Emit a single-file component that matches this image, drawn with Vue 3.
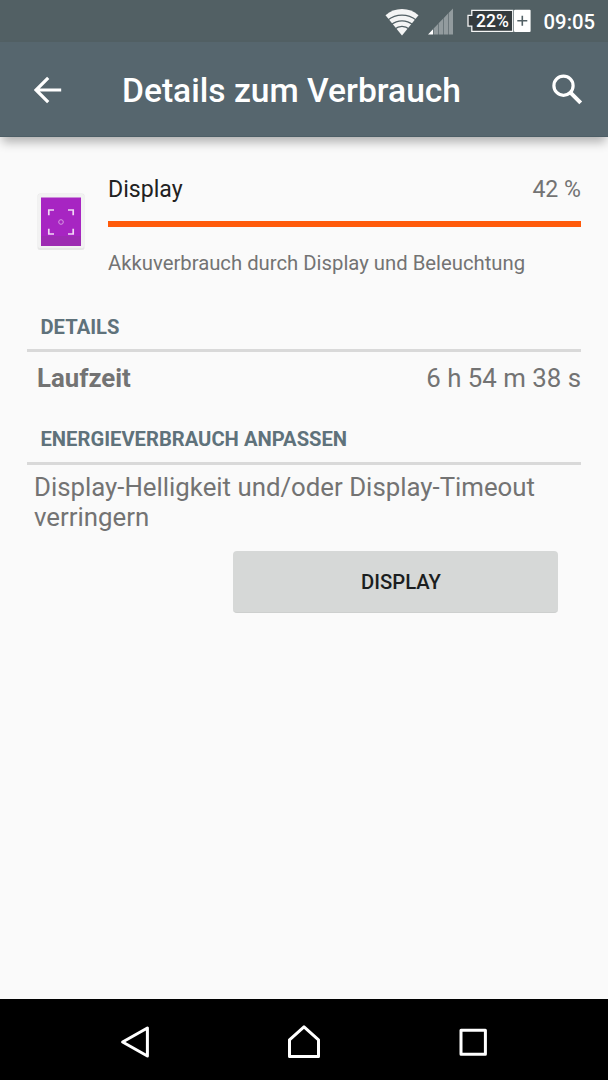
<script setup>
import { ref } from 'vue';

const charge = ref(22);
const time = ref('09:05');

const usage = ref({
  name: 'Display',
  percent: 42,
  level: 100, // Breite des Balkens
  description: 'Akkuverbrauch durch Display und Beleuchtung'
});

const details = ref([
  { label: 'Laufzeit', value: '6 h 54 m 38 s' }
]);
</script>

<template>
  <div class="screen">
    <div class="status-bar">
      <svg class="wifi" width="34" height="28" viewBox="0 0 34 28">
        <path d="M17 27.5L0.5 7.2Q7.5 1 17 1T33.5 7.2Z" fill="#f4f5f5" />
        <path d="M2.5 12.2Q9 7.1 17 7.1T31.5 12.2M6 16.8Q11 12.8 17 12.8T28 16.8M9.5 21.2Q13 18.4 17 18.4T24.5 21.2" fill="none" stroke="#526065" stroke-width="1.3" />
      </svg>
      <svg class="signal" width="26" height="27" viewBox="0 0 26 27">
        <path d="M0 26.5L5 21.2V26.5Z" fill="#fff" />
        <path d="M5.6 20.6L10 16V26.5H5.6ZM10.6 15.3L15 10.8V26.5H10.6ZM15.6 10.2L20 5.6V26.5H15.6ZM20.6 5L25 .4V26.5H20.6Z" fill="#929b9e" />
      </svg>
      <div class="battery">
        <svg width="64" height="24" viewBox="0 0 64 24">
          <path d="M4.8 1.3H45.7V22.3H4.8V17.2H1V6.4H4.8Z" fill="#343b3e" stroke="#f4f5f5" stroke-width="1.3" />
          <rect x="47" y=".7" width="16.6" height="22.3" rx="1" fill="#fff" />
          <path d="M50.3 11.8H60.3M55.3 6.8V16.8" stroke="#526065" stroke-width="1.6" />
        </svg>
        <span class="battery-text">{{ charge }}%</span>
      </div>
      <span class="clock">{{ time }}</span>
    </div>

    <header class="app-bar">
      <svg class="back" width="28" height="28" viewBox="0 0 28 28">
        <path d="M27.2 14H2.5M14.2 1.8L2 14L14.2 26.2" fill="none" stroke="#fff" stroke-width="3.2" />
      </svg>
      <h1>Details zum Verbrauch</h1>
      <svg class="search" width="32" height="32" viewBox="0 0 32 32">
        <circle cx="11.5" cy="11.7" r="9.6" fill="none" stroke="#fff" stroke-width="3.2" />
        <path d="M18.5 18.7L28.7 28.9" stroke="#fff" stroke-width="4" />
      </svg>
    </header>

    <main class="content">
      <section class="usage">
        <svg class="usage-icon" width="48" height="58" viewBox="0 0 48 58">
          <rect x=".5" y=".5" width="47" height="56.5" rx="2.5" fill="#e7e7e7" />
          <rect x="1" y="1" width="46" height="54" rx="2" fill="#f2f2f2" />
          <rect x="4" y="4.5" width="40" height="48.5" fill="#a725c2" />
          <rect x="4" y="43" width="40" height="10" fill="#9d2bb2" />
          <path d="M11.8 22.2V17H17M31 17H36.2V22.2M36.2 35.8V41H31M17 41H11.8V35.8" fill="none" stroke="#f0d8f4" stroke-width="1.7" />
          <circle cx="24" cy="29" r="2.3" fill="none" stroke="#d79be2" stroke-width="1" />
        </svg>
        <div class="usage-body">
          <div class="usage-row">
            <span class="usage-name">{{ usage.name }}</span>
            <span class="usage-percent">{{ usage.percent }} %</span>
          </div>
          <div class="bar">
            <div class="bar-fill" :style="{ width: usage.level + '%' }"></div>
          </div>
          <p class="usage-description">{{ usage.description }}</p>
        </div>
      </section>

      <h2 class="details-title">DETAILS</h2>
      <div v-for="item in details" :key="item.label" class="detail-row">
        <strong>{{ item.label }}</strong>
        <span>{{ item.value }}</span>
      </div>

      <h2>ENERGIEVERBRAUCH ANPASSEN</h2>
      <p class="hint">Display-Helligkeit und/oder Display-Timeout verringern</p>
      <button class="display-btn">DISPLAY</button>
    </main>

    <nav class="nav-bar">
      <svg width="32" height="36" viewBox="0 0 32 36">
        <path d="M28.4 4V32L3.6 18Z" fill="none" stroke="#fff" stroke-width="3" stroke-linejoin="round" />
      </svg>
      <svg width="36" height="36" viewBox="0 0 36 36">
        <path d="M3.5 32.4V15.8L18 2.8L32.5 15.8V32.4Z" fill="none" stroke="#fff" stroke-width="3" stroke-linejoin="round" />
      </svg>
      <svg width="32" height="36" viewBox="0 0 32 36">
        <rect x="4" y="6.3" width="24.4" height="24" fill="none" stroke="#fff" stroke-width="3" stroke-linejoin="round" />
      </svg>
    </nav>
  </div>
</template>

<style>
body {
  margin: 0;
}
</style>

<style scoped>
.screen {
  display: flex;
  flex-direction: column;
  width: 608px;
  height: 1080px;
  overflow: hidden;
  background: #fafafa;
  color: #737373;
  font-family: Roboto, 'Liberation Sans', sans-serif;
}
svg {
  display: block;
  flex-shrink: 0;
}
h1,
h2,
p {
  margin: 0;
}

.status-bar {
  display: flex;
  flex-shrink: 0;
  height: 42px;
  padding: 0 13px 0 385px;
  background: #526064;
  color: #fff;
}
.wifi {
  margin-top: 8px;
}
.signal {
  margin: 8px 0 0 9px;
}
.battery {
  position: relative;
  margin: 9px 0 0 13px;
}
.battery-text {
  position: absolute; /* liegt über dem Batteriesymbol */
  left: 9px;
  top: 0;
  font-size: 17.5px;
  font-weight: 500;
  line-height: 24px;
}
.clock {
  margin-left: auto;
  font-size: 20.25px;
  font-weight: 500;
  line-height: 45px;
}

.app-bar {
  display: flex;
  flex-shrink: 0;
  align-items: center;
  box-sizing: border-box;
  height: 95px;
  padding: 0 25px 0 34px;
  background: #56666e;
  border-bottom: 1px solid #4d5e66;
  color: #fff;
  box-shadow: 0 7px 10px -2px rgba(0, 0, 0, 0.3);
}
.app-bar h1 {
  margin-left: 60px;
  padding-top: 3px;
  font-size: 33.6px;
  font-weight: 500;
  white-space: nowrap;
}
.back {
  margin-top: 1px;
}
.search {
  margin: 1px -1px 0 auto;
}

.content {
  flex: 1;
  padding: 38px 27px 0;
}
.usage {
  display: flex;
  height: 137px;
}
.usage-icon {
  margin: 18px 23px 0 10px;
}
.usage-body {
  flex: 1;
}
.usage-row {
  display: flex;
  justify-content: space-between;
  font-size: 23.1px;
  line-height: 30px;
}
.usage-name {
  color: #212121;
}
.bar {
  height: 6px;
  margin-top: 16px;
}
.bar-fill {
  height: 100%;
  background: #ff5a0a;
}
.usage-description {
  margin-top: 24px;
  font-size: 20.3px;
  line-height: 24px;
}

h2 {
  height: 37px;
  padding-left: 13.5px;
  border-bottom: 3px solid #d9d9d9;
  color: #5f727b;
  font-size: 20.2px;
  font-weight: 700;
  line-height: 29px;
}
.details-title {
  line-height: 31px;
}
.detail-row {
  display: flex;
  justify-content: space-between;
  height: 73px;
  padding-left: 10px;
  font-size: 25.8px;
  line-height: 53px;
}
.hint {
  padding: 7px 0 0 7px;
  font-size: 25.8px;
  line-height: 30px;
}
.display-btn {
  display: block;
  width: 325px;
  height: 62px;
  margin: 19px 23px 0 auto;
  padding: 0 0 0 11px;
  border: 0;
  border-bottom: 1px solid #cdcfce;
  border-radius: 4px;
  background: #d6d8d7;
  color: #1b1e20;
  font: 500 20.25px Roboto, 'Liberation Sans', sans-serif;
}

.nav-bar {
  display: flex;
  flex-shrink: 0;
  align-items: center;
  justify-content: space-between;
  height: 81px;
  padding: 5px 119px 0;
  box-sizing: border-box;
  background: #000;
}
</style>
